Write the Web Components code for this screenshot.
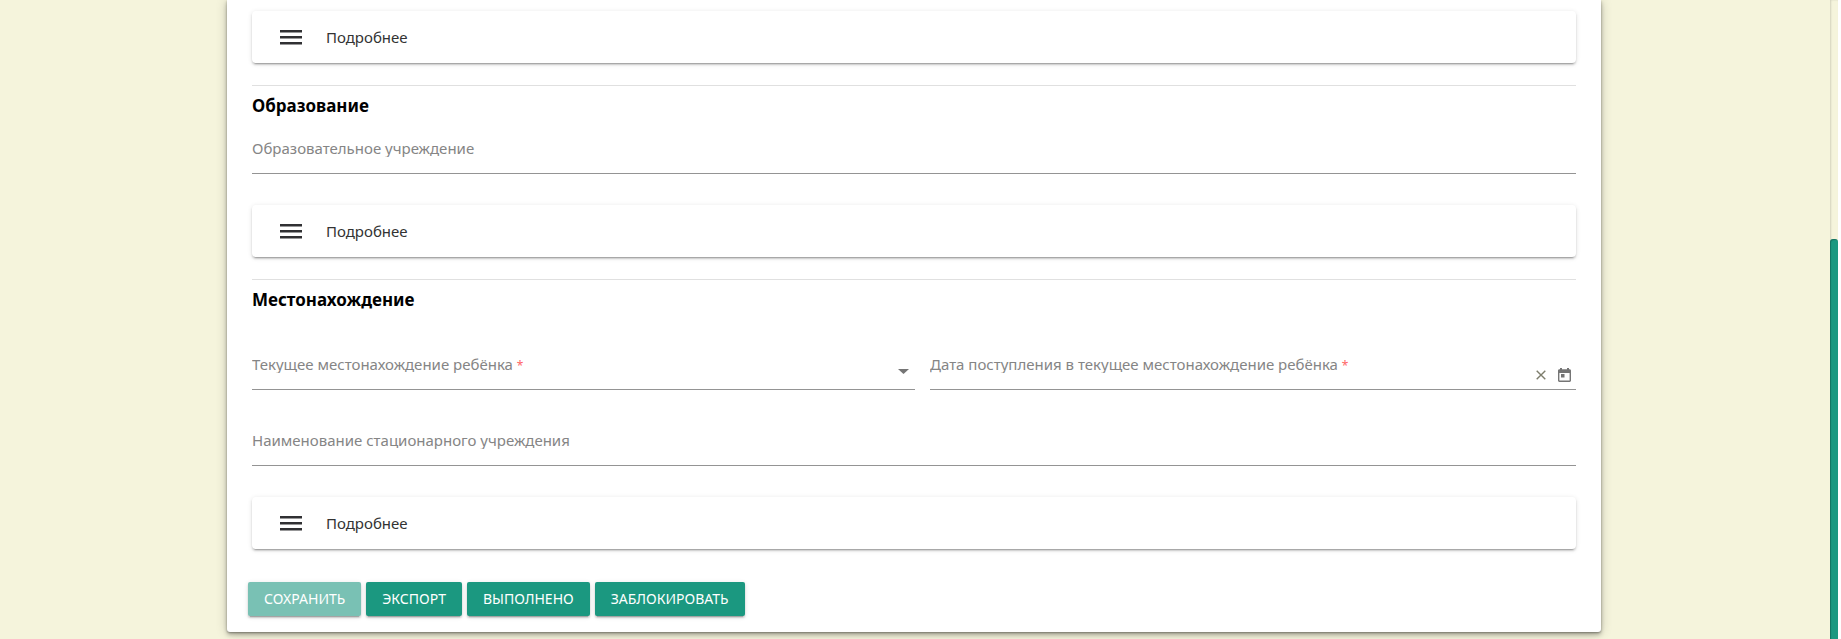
<!DOCTYPE html>
<html lang="ru">
<head>
<meta charset="utf-8">
<title>Карточка ребёнка</title>
<style>
  body { margin: 0; background: #fff; font-family: "Noto Sans", "Open Sans", sans-serif; font-size: 15px; color: #000; }
</style>
</head>
<body>
<app-page>
  <form-card>
    <details-panel></details-panel>
    <form-section heading="Образование">
      <text-field label="Образовательное учреждение"></text-field>
      <details-panel></details-panel>
    </form-section>
    <form-section heading="Местонахождение">
      <field-row>
        <select-field label="Текущее местонахождение ребёнка"></select-field>
        <date-field label="Дата поступления в текущее местонахождение ребёнка"></date-field>
      </field-row>
      <text-field label="Наименование стационарного учреждения"></text-field>
      <details-panel></details-panel>
    </form-section>
    <action-button slot="actions" disabled>СОХРАНИТЬ</action-button>
    <action-button slot="actions">ЭКСПОРТ</action-button>
    <action-button slot="actions">ВЫПОЛНЕНО</action-button>
    <action-button slot="actions">ЗАБЛОКИРОВАТЬ</action-button>
  </form-card>
</app-page>
<script>
  const define = (name, render) => customElements.define(name, class extends HTMLElement {
    constructor() {
      super();
      this.attachShadow({ mode: 'open' }).innerHTML = render(this);
    }
  });

  define('page-scrollbar', () => `
    <style>
      :host { display: grid; grid-template-rows: 239px 1fr; background: #f5f4dc; box-shadow: inset 1px 0 2px rgba(0,0,0,.14); }
      .thumb { grid-row: 2; background: #1b9880; border-radius: 3px 3px 0 0; box-shadow: inset 1px 1px 1px rgba(0,0,0,.25); }
    </style>
    <div class="thumb"></div>`);

  define('app-page', () => `
    <style>
      :host { display: grid; grid-template-columns: 1fr 8px; padding-right: 3px; min-height: 100vh; }
      main { background: #f5f4dc; padding: 0 229px 7px 227px; overflow: hidden; }
    </style>
    <main><slot></slot></main>
    <page-scrollbar></page-scrollbar>`);

  define('form-card', () => `
    <style>
      :host { display: block; background: #fff; border-radius: 0 0 3px 3px; padding: 11px 25px 16px;
        box-shadow: 0 3px 4px rgba(0,0,0,.22), 0 1px 12px rgba(0,0,0,.2), 0 1px 2px rgba(0,0,0,.3); }
      .actions { display: flex; gap: 5px; margin: 33px 0 0 -4px; }
    </style>
    <slot></slot>
    <div class="actions"><slot name="actions"></slot></div>`);

  define('form-section', el => `
    <style>
      :host { display: block; margin-top: 22px; border-top: 1px solid #e0e0e0; }
      h2 { margin: 7px 0 10px; font-size: 17px; line-height: 26px; font-weight: 700; }
    </style>
    <h2>${el.getAttribute('heading')}</h2>
    <slot></slot>`);

  define('details-panel', () => `
    <style>
      :host { display: block; }
      button { display: flex; align-items: center; gap: 24px; width: 100%; height: 52px; padding: 0 28px; border: 0;
        border-radius: 4px; background: #fff; font: inherit; line-height: 20px; color: #333;
        box-shadow: 0 3px 1px -2px rgba(0,0,0,.2), 0 2px 2px rgba(0,0,0,.14), 0 1px 5px rgba(0,0,0,.12); }
    </style>
    <button type="button">
      <svg width="22" height="15" fill="#303033" aria-hidden="true"><path d="M0 0h22v2.500H0zM0 6h22v2.500H0zM0 12h22v2.500H0z"/></svg>
      <span>Подробнее</span>
    </button>`);

  const fieldStyle = `
      :host { display: block; padding-bottom: 31px; }
      .field { display: grid; height: 36px; border-bottom: 1px solid #949494; }
      label { grid-area: 1 / 1; align-self: start; height: 20px; overflow: hidden; line-height: 22px; color: #858585; white-space: nowrap; pointer-events: none; z-index: 1; }
      input, select { grid-area: 1 / 1; width: 100%; height: 100%; min-width: 0; box-sizing: border-box; margin: 0; padding: 0; border: 0; outline: 0; background: none; appearance: none; font: inherit; }
      b { color: #f66; font-weight: 400; font-size: 12px; }`;

  define('text-field', el => `
    <style>${fieldStyle}
      :host { padding-top: 8px; }
    </style>
    <div class="field"><label for="c">${el.getAttribute('label')}</label><input id="c" type="text"></div>`);

  define('select-field', el => `
    <style>${fieldStyle}
      svg { grid-area: 1 / 1; justify-self: end; align-self: center; margin-right: 6px; pointer-events: none; }
    </style>
    <div class="field">
      <label for="c">${el.getAttribute('label')} <b>*</b></label>
      <select id="c" required><option value=""></option></select>
      <svg width="11" height="5" fill="#757575" aria-hidden="true"><path d="M0 0h11L5.500 5z"/></svg>
    </div>`);

  define('date-field', el => `
    <style>${fieldStyle}
      .tools { grid-area: 1 / 1; justify-self: end; align-self: end; display: flex; align-items: center; gap: 12px; padding: 0 5px 7px 0; z-index: 1; }
      button { display: flex; border: 0; padding: 0; background: none; color: #757575; }
    </style>
    <div class="field">
      <label for="c">${el.getAttribute('label')} <b>*</b></label>
      <input id="c" type="text" required>
      <div class="tools">
        <button type="button" aria-label="Очистить"><svg width="10" height="10" fill="none" stroke="#7d7d6c" stroke-width="1.4"><path d="M.7.7l8.600 8.600M9.300.7L.7 9.300"/></svg></button>
        <button type="button" aria-label="Открыть календарь"><svg width="13" height="14" fill="currentColor"><path fill-rule="evenodd" d="M2 0h2v1.300h5V0h2v1.300h.6c.8 0 1.400.6 1.400 1.400v9.900c0 .8-.6 1.400-1.400 1.400H1.400C.6 14 0 13.400 0 12.600V2.700C0 1.900.6 1.300 1.400 1.300H2zM1.400 5v7.600h10.200V5zM3 6h3.500v3.500H3z"/></svg></button>
      </div>
    </div>`);

  define('field-row', () => `
    <style>
      :host { display: grid; grid-template-columns: 663fr 646fr; gap: 15px; padding-top: 30px; }
    </style>
    <slot></slot>`);

  define('action-button', el => `
    <style>
      :host { display: block; }
      button { height: 34px; padding: 0 16px; border: 0; border-radius: 2px; background: #1b9880; color: #fff; font: inherit; font-size: 14px; line-height: 20px;
        box-shadow: 0 3px 1px -2px rgba(0,0,0,.2), 0 2px 2px rgba(0,0,0,.14), 0 1px 5px rgba(0,0,0,.12); }
      button:disabled { background: #79c1b4; }
    </style>
    <button type="button" ${el.hasAttribute('disabled') ? 'disabled' : ''}><slot></slot></button>`);
</script>
</body>
</html>
